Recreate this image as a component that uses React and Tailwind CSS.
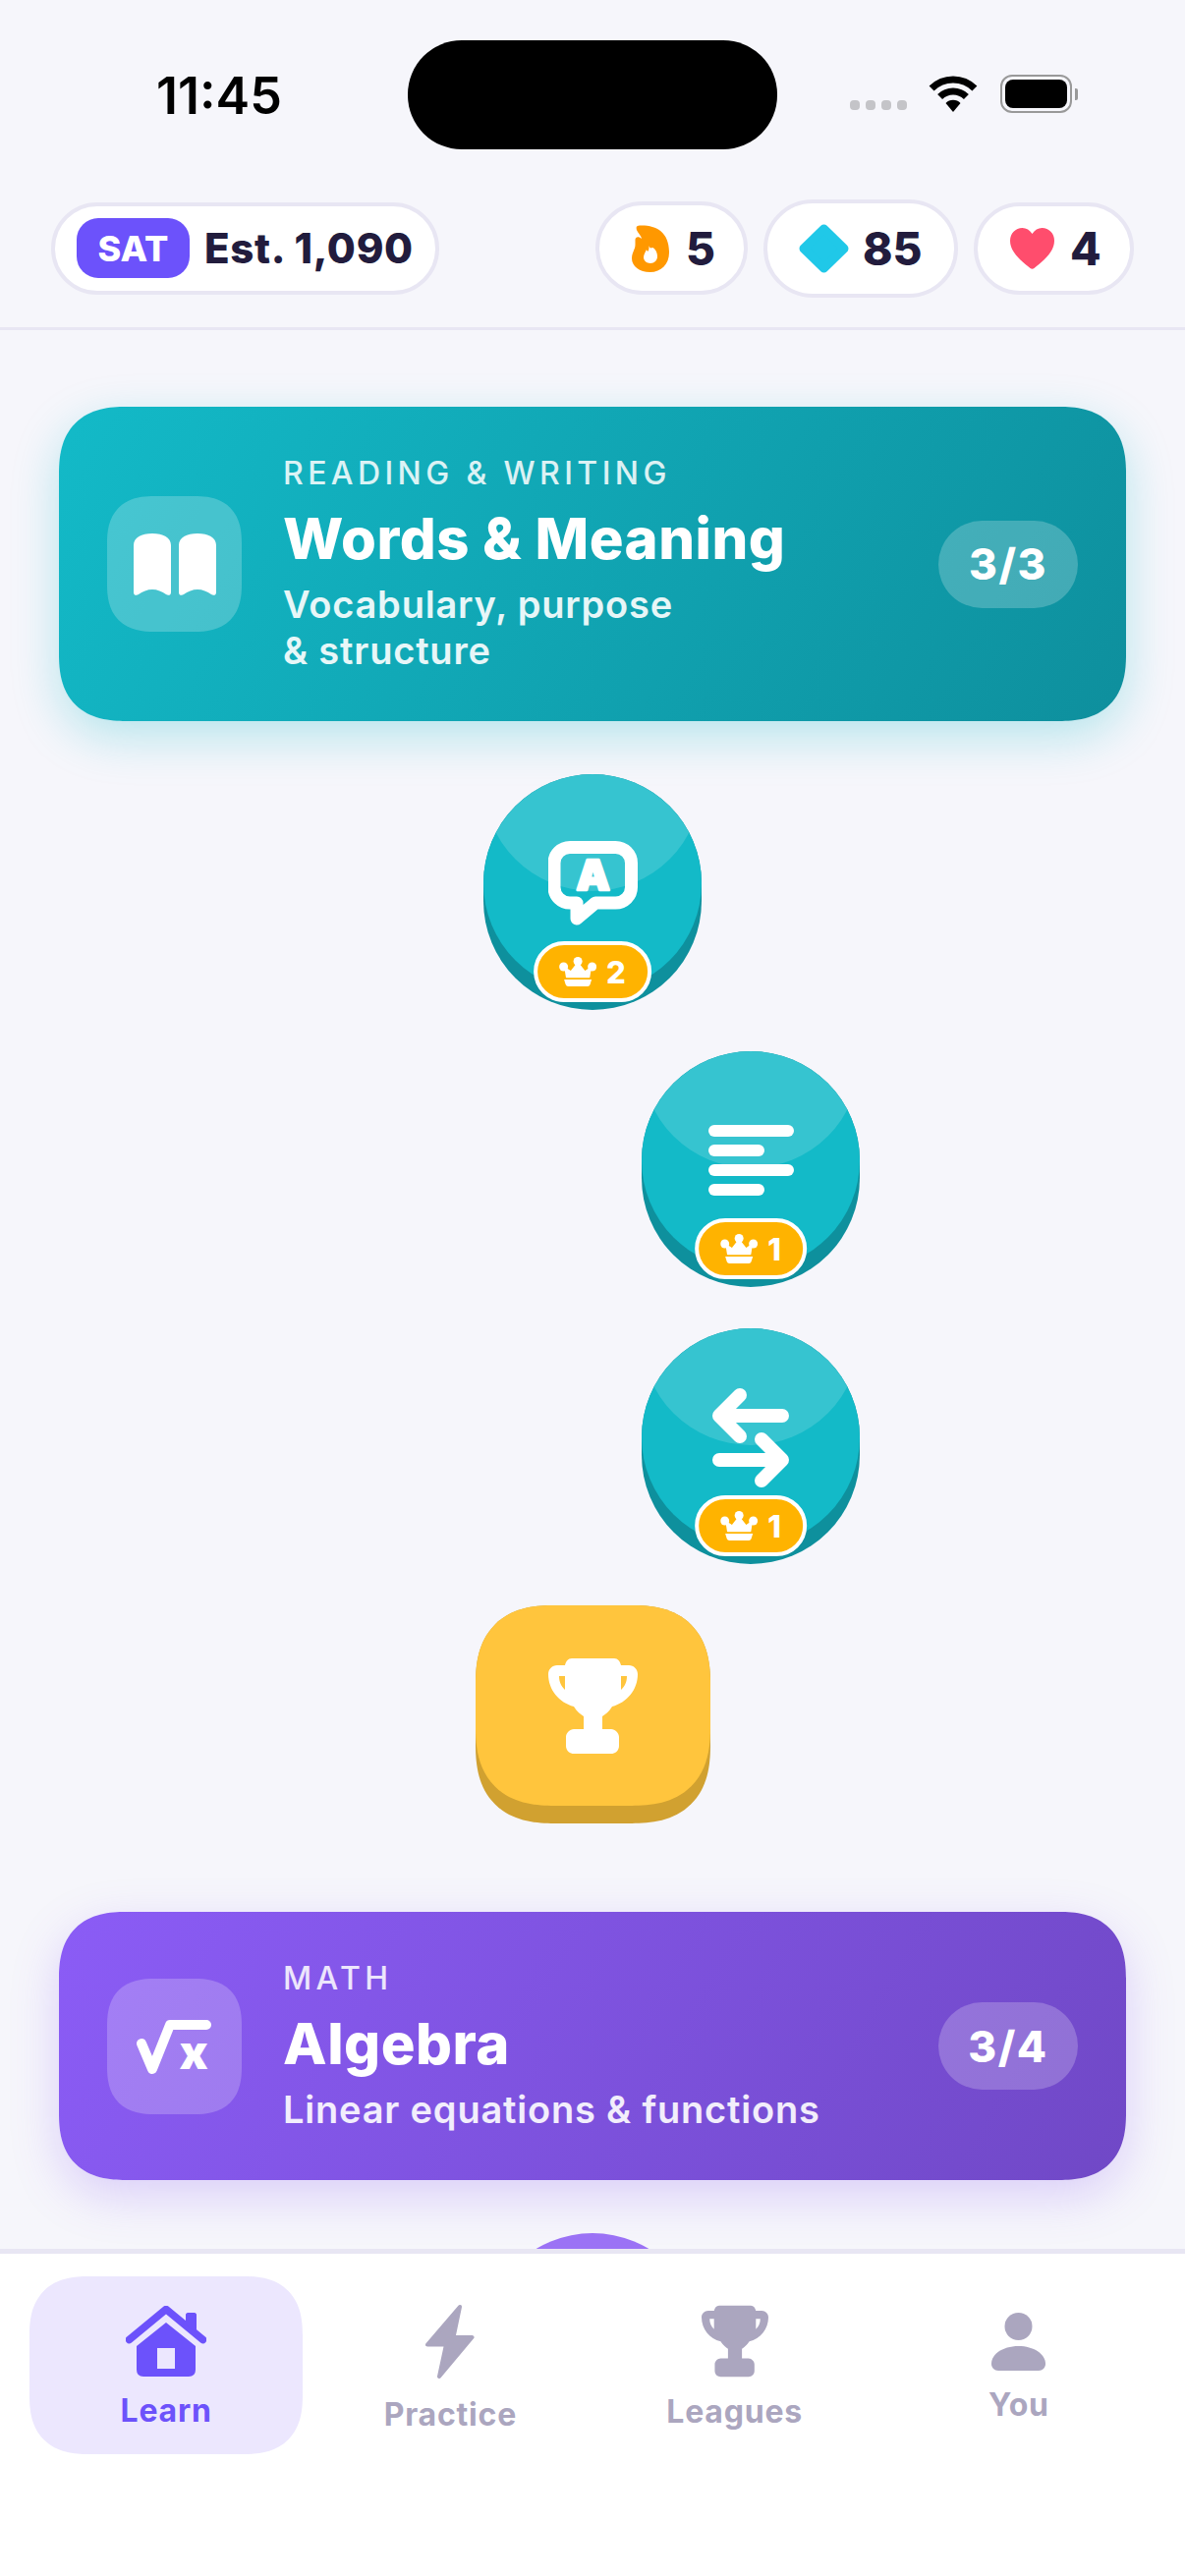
import React from 'react';

const ink = '#221c3d';

function Wifi() {
    return (
        <svg width="50" height="37" viewBox="0 0 50 37" fill="none" stroke="#000" strokeWidth="7">
            <path d="M3.1 13.1A31 31 0 0 1 46.9 13.1" />
            <path d="M11.6 21.6A19 19 0 0 1 38.4 21.6" />
            <path d="M25 37L17.5 28A10.5 10.5 0 0 1 32.5 28Z" fill="#000" stroke="none" />
        </svg>
    );
}

function Flame() {
    return (
        <svg width="38" height="48" viewBox="0 0 38 48">
            <path fill="#ff9800" d="M5 1.5C5.5 1 7 .5 10 .5C26 .5 38 8 38 28C38 40 30 48 18.5 48C8 48 0 42 0 34C0 28 3.5 25 3.5 20V15C3.5 12 7 11 10 14C10 10 3 6 5 1.5Z" />
            <path fill="#fff" d="M17.5 21C18 23 19 24 21 23C24 24 26 28 26 32C26 36 23 39 19 39C15 39 12 36 12 33C12 30 14 27 15 25C15.5 27 16.5 27 17 26C17.5 24.5 17.5 23 17.5 21Z" />
        </svg>
    );
}

function Diamond() {
    return (
        <svg width="51" height="50" viewBox="0 0 51 50">
            <path d="M25.5 5L46 25L25.5 45L5 25Z" fill="#20c8e8" stroke="#20c8e8" strokeWidth="9" strokeLinejoin="round" />
        </svg>
    );
}

function Heart() {
    return (
        <svg width="45" height="42" viewBox="0 0 45 42">
            <path fill="#ff4d6d" d="M22.5 6C20 2 16.5 0 12.5 0C5.5 0 0 5.5 0 13C0 25 12 34 20.5 41C21.7 42 23.3 42 24.5 41C33 34 45 25 45 13C45 5.5 39.5 0 32.5 0C28.5 0 25 2 22.5 6Z" />
        </svg>
    );
}

function Crown() {
    return (
        <svg width="38" height="30" viewBox="0 0 38 30" fill="#fff">
            <circle cx="4.5" cy="10" r="4.5" />
            <circle cx="19" cy="4.5" r="4.5" />
            <circle cx="33.5" cy="10" r="4.5" />
            <path d="M6 11L12 15L19 6L26 15L32 11L30.5 20.5H7.5Z" stroke="#fff" strokeWidth="1.5" strokeLinejoin="round" />
            <path d="M5 23H33L31.5 28C31 29.3 30 30 29 30H9C8 30 7 29.3 6.5 28Z" />
        </svg>
    );
}

function BookIcon() {
    const page = 'M0 12C0 4 8 0 19 0C30 0 38 4 38 12V60C38 63 35 63.5 33 62C29 59 24 57 19 57C14 57 9 59 5 62C3 63.5 0 63 0 60Z';
    return (
        <svg width="84" height="63" viewBox="0 0 84 63" fill="#fff">
            <path d={page} />
            <path d={page} transform="translate(46 0)" />
        </svg>
    );
}

function RootIcon() {
    return (
        <svg width="77" height="56" viewBox="0 0 77 56" fill="none" className="overflow-visible">
            <path d="M5 25L16 51L34 6H71" stroke="#fff" strokeWidth="10" strokeLinecap="round" strokeLinejoin="round" />
            <text x="58" y="51" textAnchor="middle" fontSize="48" fontWeight="900" fill="#fff" fontFamily="Inter, sans-serif">x</text>
        </svg>
    );
}

function BubbleIcon() {
    return (
        <svg width="91" height="86" viewBox="0 0 91 86" fill="none">
            <path
                d="M22 6.5H68.5A16 16 0 0 1 84.5 22.5V47A16 16 0 0 1 68.5 63H48L29 79V63H22A16 16 0 0 1 6 47V22.5A16 16 0 0 1 22 6.5Z"
                stroke="#fff"
                strokeWidth="13"
                strokeLinejoin="round"
            />
            <text x="45.5" y="50" textAnchor="middle" fontSize="43" fontWeight="900" fill="#fff" stroke="#fff" strokeWidth="2.5" strokeLinejoin="round" fontFamily="Inter, sans-serif">A</text>
        </svg>
    );
}

function LinesIcon() {
    return (
        <svg width="87" height="72" viewBox="0 0 87 72" fill="#fff">
            <rect x="0" y="0" width="87" height="12" rx="6" />
            <rect x="0" y="20" width="57" height="12" rx="6" />
            <rect x="0" y="40" width="87" height="12" rx="6" />
            <rect x="0" y="60" width="57" height="12" rx="6" />
        </svg>
    );
}

function ArrowsIcon() {
    return (
        <svg width="78" height="101" viewBox="0 0 78 101" fill="none" stroke="#fff" strokeWidth="14" strokeLinecap="round" strokeLinejoin="round">
            <path d="M71 28H7M28 7L7 28L28 49" />
            <path d="M7 73H71M50 52L71 73L50 94" />
        </svg>
    );
}

function TrophyIcon({ width, height, color }) {
    return (
        <svg width={width} height={height} viewBox="0 0 91 97">
            <path
                fill={color}
                fillRule="evenodd"
                d="M24 0H67C71 0 73 3 74 7H82C87 7 91 11 91 16C91 32 80 45 65 49C62 54 58 57 55 59V72H64C68 72 72 76 72 80V89C72 94 68 97 64 97H26C22 97 18 94 18 89V80C18 76 22 72 26 72H36V59C33 57 29 54 26 49C11 45 0 32 0 16C0 11 4 7 9 7H17C18 3 20 0 24 0ZM11 18H17V32C13 28 11 24 11 18ZM80 18H74V32C78 28 80 24 80 18Z"
            />
        </svg>
    );
}

function HomeIcon() {
    return (
        <svg width="82" height="72" viewBox="0 0 82 72">
            <path d="M3.5 34.5L41 3.5L78.5 34.5" fill="none" stroke="#6c52fb" strokeWidth="7.5" strokeLinecap="round" strokeLinejoin="round" />
            <path d="M61 9C61 8 62 7 63 7H70C71 7 72 8 72 9V28L61 19Z" fill="#6c52fb" />
            <path fill="#6c52fb" fillRule="evenodd" d="M41 17L71 41V65Q71 72 64 72H18Q11 72 11 65V41ZM32 43V64H50V43Z" />
        </svg>
    );
}

function BoltIcon() {
    return (
        <svg width="50" height="76" viewBox="0 0 50 76">
            <path d="M35 3L2 41.5H21L14 74L47.5 34H28.5Z" fill="#aba6bf" stroke="#aba6bf" strokeWidth="4" strokeLinejoin="round" />
        </svg>
    );
}

function PersonIcon() {
    return (
        <svg width="55" height="59" viewBox="0 0 55 59" fill="#aba6bf">
            <circle cx="27.5" cy="14" r="14" />
            <path d="M0 52C0 42 12 34 27.5 34C43 34 55 42 55 52C55 56 52 59 48 59H7C3 59 0 56 0 52Z" />
        </svg>
    );
}

function StatPill({ className, icon, value }) {
    return (
        <div className={`flex items-center rounded-full border-4 border-[#e8e6f3] bg-white ${className}`}>
            {icon}
            <span className="text-[46px] font-extrabold leading-none text-[#221c3d]">{value}</span>
        </div>
    );
}

function UnitCard({ gradient, label, title, subtitle, progress, icon }) {
    return (
        <div className={`flex items-center rounded-[68px] py-[48px] pl-[49px] pr-[49px] [corner-shape:superellipse(1.3)] ${gradient}`}>
            <div className="flex h-[138px] w-[137px] shrink-0 items-center justify-center rounded-[48px] bg-white/22 [corner-shape:superellipse(1.3)]">
                {icon}
            </div>
            <div className="ml-[42px] flex-1">
                <div className="text-[32px] font-medium leading-[40px] tracking-[4.4px] text-white/85">{label}</div>
                <div className="mt-[13px] text-[58px] font-extrabold leading-[66px] tracking-[0.5px] text-white">{title}</div>
                <div className="mt-[11px] text-[38px] font-semibold leading-[47px] tracking-[0.8px] text-white/90">{subtitle}</div>
            </div>
            <div className="flex h-[89px] w-[142px] shrink-0 items-center justify-center rounded-full bg-white/22 text-[44px] font-extrabold tracking-[1.5px] text-white">
                {progress}
            </div>
        </div>
    );
}

function LessonNode({ icon, crowns, className = '' }) {
    return (
        <div className={`relative h-[240px] w-[222px] rounded-full bg-[#0e909d] ${className}`}>
            <div className="relative flex h-[222px] w-[222px] items-center justify-center overflow-hidden rounded-full bg-[#13bac8]">
                <div className="absolute -top-[103px] left-0 h-[222px] w-[222px] rounded-full bg-white/15" />
                <div className="relative">{icon}</div>
            </div>
            <div className="absolute bottom-[8px] left-1/2 flex h-[62px] -translate-x-1/2 items-center gap-[10px] rounded-full border-4 border-white bg-[#ffb300] px-[22px]">
                <Crown />
                <span className="text-[31px] font-extrabold leading-none text-white">{crowns}</span>
            </div>
        </div>
    );
}

const tabs = [
    { label: 'Learn', icon: <HomeIcon />, className: 'pt-[30px] gap-[15px] text-[#6c52fb] bg-[#ece7fe]' },
    { label: 'Practice', icon: <BoltIcon />, className: 'pt-[28px] gap-[17px] text-[#aba6bf]' },
    { label: 'Leagues', icon: <TrophyIcon width={68} height={74} color="#aba6bf" />, className: 'pt-[29px] gap-[15px] text-[#aba6bf]' },
    { label: 'You', icon: <PersonIcon />, className: 'pt-[37px] gap-[15px] text-[#aba6bf]' },
];

export default function App() {
    return (
        <div className="flex h-[2622px] w-[1206px] flex-col overflow-hidden bg-[#f6f6fb] font-[family-name:Inter,sans-serif]">
            {/* status bar */}
            <div className="flex h-[152px] shrink-0 items-start pt-[41px]">
                <div className="flex h-[111px] w-[415px] items-center pl-[159px]">
                    <span className="mt-[2px] text-[52px] font-semibold leading-none text-black">11:45</span>
                </div>
                <div className="h-[111px] w-[376px] rounded-[55px] bg-black" />
                <div className="flex h-[111px] items-center pl-[74px]">
                    <div className="mr-[22px] mt-[21px] flex gap-[6px]">
                        <div className="h-[10px] w-[10px] rounded-[4px] bg-[#c4c4c8]" />
                        <div className="h-[10px] w-[10px] rounded-[4px] bg-[#c4c4c8]" />
                        <div className="h-[10px] w-[10px] rounded-[4px] bg-[#c4c4c8]" />
                        <div className="h-[10px] w-[10px] rounded-[4px] bg-[#c4c4c8]" />
                    </div>
                    <div className="mr-[23px] -mt-[2px]"><Wifi /></div>
                    <div className="-mt-[2px] flex h-[39px] w-[73px] items-center justify-center rounded-[12px] border-[2.5px] border-[#999]">
                        <div className="h-[29px] w-[63px] rounded-[8px] bg-black" />
                    </div>
                    <div className="ml-[3px] -mt-[2px] h-[12px] w-[3px] rounded-r-[2px] bg-[#999]" />
                </div>
            </div>

            {/* top bar */}
            <div className="flex h-[184px] shrink-0 items-center justify-between border-b-[3px] border-[#e8e6f3] px-[52px] pt-[20px]">
                <div className="flex h-[94px] w-[395px] items-center gap-[15px] rounded-full border-4 border-[#e8e6f3] bg-white pl-[22px]">
                    <div className="flex h-[61px] w-[115px] items-center justify-center rounded-[22px] bg-[#6c52fb] text-[36px] font-extrabold text-white">SAT</div>
                    <span className="text-[42px] font-extrabold leading-none tracking-[0.7px]" style={{ color: ink }}>Est. 1,090</span>
                </div>
                <div className="flex items-center gap-[16px]">
                    <StatPill className="h-[95px] w-[155px] gap-[17px] pl-[33px]" icon={<Flame />} value="5" />
                    <StatPill className="h-[100px] w-[198px] gap-[14px] pl-[32px]" icon={<Diamond />} value="85" />
                    <StatPill className="h-[94px] w-[163px] gap-[16px] pl-[33px]" icon={<Heart />} value="4" />
                </div>
            </div>

            {/* learning path */}
            <div className="flex min-h-0 flex-1 flex-col items-center overflow-hidden px-[60px] pt-[78px]">
                <div className="w-full shrink-0 rounded-[68px] shadow-[0_16px_48px_rgba(19,186,200,0.28)] [corner-shape:superellipse(1.3)]">
                    <UnitCard
                        gradient="bg-linear-[120deg,#13bac8,#0e8f9d]"
                        label="READING & WRITING"
                        title="Words & Meaning"
                        subtitle={<>Vocabulary, purpose<br />& structure</>}
                        progress="3/3"
                        icon={<BookIcon />}
                    />
                </div>
                <LessonNode className="mt-[54px] shrink-0" icon={<BubbleIcon />} crowns="2" />
                <LessonNode className="ml-[322px] mt-[42px] shrink-0" icon={<LinesIcon />} crowns="1" />
                <LessonNode className="ml-[322px] mt-[42px] shrink-0" icon={<ArrowsIcon />} crowns="1" />
                <div className="mt-[42px] h-[222px] w-[239px] shrink-0 rounded-[80px] bg-[#d1a130] [corner-shape:superellipse(1.3)]">
                    <div className="flex h-[204px] w-[239px] items-center justify-center rounded-[80px] bg-[#ffc53d] [corner-shape:superellipse(1.3)]">
                        <TrophyIcon width={91} height={97} color="#fff" />
                    </div>
                </div>
                <div className="mt-[90px] w-full shrink-0 rounded-[68px] shadow-[0_16px_48px_rgba(139,92,246,0.25)] [corner-shape:superellipse(1.3)]">
                    <UnitCard
                        gradient="bg-linear-[120deg,#8b5cf6,#7048c6]"
                        label="MATH"
                        title="Algebra"
                        subtitle="Linear equations & functions"
                        progress="3/4"
                        icon={<RootIcon />}
                    />
                </div>
                <div className="mt-[54px] h-[222px] w-[222px] shrink-0 rounded-full bg-[#9b72f5]" />
            </div>

            {/* tab bar */}
            <div className="grid h-[333px] shrink-0 grid-cols-4 items-start gap-[11px] border-t-[5px] border-[#e8e6f3] bg-white px-[30px] pt-[23px]">
                {tabs.map((tab) => (
                    <div key={tab.label} className={`flex h-[181px] flex-col items-center rounded-[60px] [corner-shape:superellipse(1.3)] ${tab.className}`}>
                        {tab.icon}
                        <span className="text-[32px] font-bold leading-[40px] tracking-[0.8px]">{tab.label}</span>
                    </div>
                ))}
            </div>
        </div>
    );
}
